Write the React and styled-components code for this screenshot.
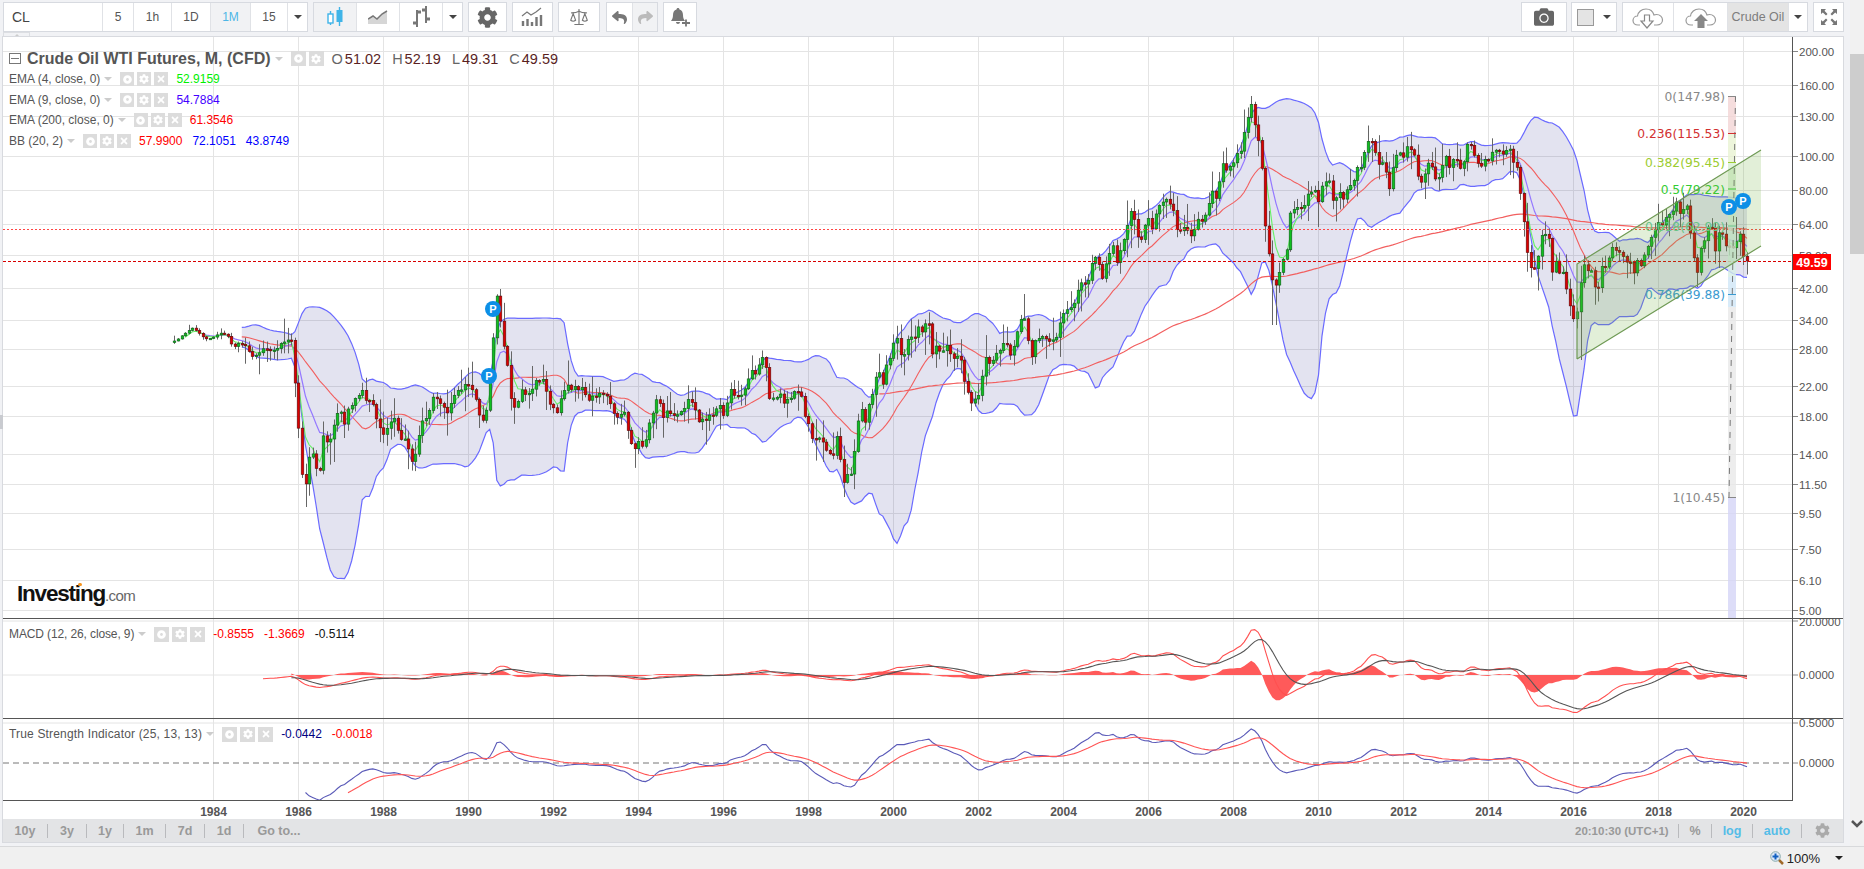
import React from "react";
import styled, { createGlobalStyle } from "styled-components";
import { FaCamera, FaCog, FaReply, FaShare, FaTimes, FaDotCircle } from "react-icons/fa";
import { Scale } from "lucide-react";

const GlobalStyle = createGlobalStyle`
  html, body {
    margin: 0;
    padding: 0;
    width: 1864px;
    height: 869px;
    overflow: hidden;
    background: #f1f1f1;
    font-family: "Liberation Sans", Arial, sans-serif;
  }
`;

// closes traced month by month, in page pixels
const TRACE = [
  [176,341],[180,337],[192,328],[198,332],[205,339],[212,338],[220,333],[227,335],[233,348],[240,342],[247,351],[254,357],[262,348],[272,353],[279,348],[286,337],[291,337],[293,357],[297,408],[301,462],[304,497],[308,462],[312,450],[316,466],[318,487],[323,433],[326,445],[330,443],[336,416],[340,408],[344,427],[347,408],[354,403],[357,397],[362,390],[364,401],[368,403],[372,399],[375,410],[378,427],[385,433],[389,423],[393,416],[401,441],[407,441],[411,460],[415,458],[417,439],[422,422],[428,413],[433,397],[439,400],[447,412],[453,398],[463,386],[467,381],[474,397],[478,410],[482,420],[485,423],[488,393],[492,352],[495,317],[497,295],[499,302],[502,343],[506,345],[509,387],[513,405],[517,406],[520,392],[527,394],[532,387],[542,376],[546,388],[549,405],
  [557,410],[560,403],[563,393],[567,383],[571,387],[580,387],[584,394],[587,399],[595,398],[598,395],[608,397],[612,408],[617,417],[623,408],[627,424],[630,438],[633,452],[637,441],[641,448],[645,444],[649,424],[655,403],[658,397],[662,418],[666,412],[677,417],[681,412],[690,397],[694,410],[698,420],[708,417],[715,413],[719,403],[723,417],[727,403],[729,388],[733,392],[737,400],[741,393],[747,383],[751,370],[757,373],[762,359],[766,370],[768,396],[774,397],[779,393],[782,400],[789,402],[793,391],[800,388],[804,417],[807,422],[812,438],[819,437],[822,440],[825,452],[833,460],[835,432],[839,448],[843,487],[847,476],[850,474],[853,467],[857,425],[861,409],[864,426],[868,403],[872,395],[874,383],[878,368],[882,386],[886,368],[889,362],[892,351],[896,335],[900,355],[903,361],[907,343],[910,325],[913,352],[917,323],[920,333],[924,325],[928,319],[932,354],[936,344],[938,352],[946,346],[952,357],[959,353],[963,375],[967,390],[971,403],[977,400],[981,387],[984,357],[992,363],[996,355],[1003,343],[1005,335],[1009,353],[1013,353],[1017,332],[1021,320],[1023,307],[1027,332],[1030,361],[1035,340],[1042,335],[1048,342],
  [1056,342],[1059,325],[1066,310],[1073,303],[1077,293],[1083,280],[1087,287],[1092,262],[1094,254],[1098,262],[1102,282],[1106,265],[1108,255],[1112,244],[1116,262],[1122,242],[1126,232],[1129,212],[1133,217],[1137,233],[1141,240],[1144,229],[1147,213],[1152,229],[1155,217],[1158,206],[1165,201],[1168,199],[1173,208],[1176,225],[1179,236],[1183,225],[1191,238],[1194,230],[1197,218],[1204,222],[1207,207],[1212,193],[1216,201],[1219,186],[1222,163],[1225,173],[1229,162],[1233,168],[1236,152],[1240,152],[1243,137],[1247,118],[1251,104],[1253,122],[1257,133],[1261,154],[1264,214],[1268,247],[1272,277],[1276,287],[1279,277],[1282,262],[1286,257],[1289,217],[1293,209],[1297,210],[1300,209],[1304,207],[1307,195],[1315,190],[1317,203],[1322,189],[1325,183],[1328,177],[1332,200],[1336,197],[1339,190],[1342,205],[1347,190],[1350,187],[1353,182],[1357,168],[1360,167],[1363,160],[1367,145],[1370,135],[1374,152],[1378,163],[1382,162],[1386,173],[1389,191],[1393,166],[1396,155],[1399,155],[1403,157],[1407,145],[1409,150],[1413,148],[1417,177],[1421,180],[1424,175],[1428,161],[1432,167],[1435,177],[1439,177],[1442,168],[1446,159],[1449,167],[1456,159],[1460,167],[1463,167],[1467,147],[1471,144],[1473,151],[1477,160],[1481,166],[1484,158],[1488,159],[1492,152],[1498,154],
  [1503,153],[1509,147],[1513,162],[1517,170],[1520,188],[1523,217],[1527,251],[1531,267],[1537,267],[1541,233],[1545,232],[1548,232],[1552,270],[1556,262],[1558,275],[1562,272],[1566,287],[1569,300],[1572,321],[1576,320],[1579,300],[1583,263],[1587,273],[1590,266],[1595,289],[1598,287],[1602,265],[1605,270],[1608,262],[1612,249],[1615,250],[1618,248],[1622,258],[1626,261],[1630,265],[1633,272],[1637,260],[1640,269],[1643,256],[1647,247],[1650,239],[1654,232],[1657,221],[1661,228],[1664,221],[1668,212],[1672,215],[1675,200],[1679,212],[1682,209],[1686,202],[1689,219],[1693,257],[1697,274],[1701,249],[1704,239],[1707,232],[1711,223],[1715,249],[1718,236],[1722,234],[1725,246],[1729,249],[1732,248],[1735,245],[1739,228],[1743,256],[1747,261],
];

// long wicks that stand out in the chart: x, high y, low y
const LONG_WICKS = [
  [1251,96,null],[1272,null,325],[1276,null,325],[1579,null,360],[1697,null,287],[499,289,null],[304,null,507],[843,null,497],[1735,217,null],[1743,null,265],[1023,294,null],
];

const N = 445;
const STEP = 3.5417;
const yOfPrice = (p) => 853.8 - 151.5 * Math.log(p);
const priceOfY = (y) => Math.exp((853.8 - y) / 151.5);

let seed = 71;
const rand = () => {
  seed = (seed * 16807) % 2147483647;
  return seed / 2147483647;
};

const traceAt = (x) => {
  if (x <= TRACE[0][0]) return TRACE[0][1];
  for (let i = 1; i < TRACE.length; i++) {
    if (x <= TRACE[i][0]) {
      const [x0, y0] = TRACE[i - 1];
      const [x1, y1] = TRACE[i];
      return y0 + ((y1 - y0) * (x - x0)) / (x1 - x0);
    }
  }
  return TRACE[TRACE.length - 1][1];
};

const xs = Array.from({ length: N }, (_, i) => 1747 - (N - 1 - i) * STEP);
// a little month to month noise, the trace is smoother than the real closes
const closeY = xs.map((x, i) => traceAt(x) + (i < 20 || i > N - 3 ? 0 : (rand() - 0.5) * 6));
const closes = closeY.map(priceOfY);

const emaOf = (arr, period) => {
  const out = arr.map(() => null);
  const first = arr.findIndex((v) => v !== null);
  if (first < 0 || first + period > arr.length) return out;
  let prev = 0;
  for (let i = first; i < first + period; i++) prev += arr[i] / period;
  out[first + period - 1] = prev;
  const k = 2 / (period + 1);
  for (let i = first + period; i < arr.length; i++) {
    prev = arr[i] * k + prev * (1 - k);
    out[i] = prev;
  }
  return out;
};

const mid = closes.map(() => null);
const upper = closes.map(() => null);
const lower = closes.map(() => null);
for (let i = 19; i < N; i++) {
  const win = closes.slice(i - 19, i + 1);
  const m = win.reduce((a, b) => a + b, 0) / 20;
  const sd = Math.sqrt(win.reduce((a, b) => a + (b - m) * (b - m), 0) / 20);
  mid[i] = m;
  upper[i] = m + 2 * sd;
  lower[i] = Math.max(m - 2 * sd, 1);
}

const ema12 = emaOf(closes, 12);
const ema26 = emaOf(closes, 26);
const macd = closes.map((_, i) => (ema26[i] === null ? null : ema12[i] - ema26[i]));
const signal = emaOf(macd, 9);

const mom = closes.map((c, i) => (i === 0 ? null : c - closes[i - 1]));
const absMom = mom.map((m) => (m === null ? null : Math.abs(m)));
const num = emaOf(emaOf(mom, 25), 13);
const den = emaOf(emaOf(absMom, 25), 13);
const tsi = num.map((v, i) => (v === null ? null : v / den[i]));
const tsiSignal = emaOf(tsi, 13);

const linePath = (values, toY) => {
  let d = "";
  values.forEach((v, i) => {
    if (v === null) return;
    d += `${d ? "L" : "M"}${xs[i].toFixed(1)} ${toY(v).toFixed(1)}`;
  });
  return d;
};

const macdY = (v) => 675 - v * 2.72;
// the traced closes have less chop than the real ones, so the tsi comes out a bit tall
const tsiY = (v) => 763 - v * (v > 0 ? 64 : 74);

const bandPath = () => {
  const top = [];
  const bottom = [];
  upper.forEach((v, i) => {
    if (v === null) return;
    top.push(`${xs[i].toFixed(1)} ${yOfPrice(v).toFixed(1)}`);
    bottom.unshift(`${xs[i].toFixed(1)} ${yOfPrice(lower[i]).toFixed(1)}`);
  });
  return `M${top.join("L")}L${bottom.join("L")}Z`;
};

const histPath = () => {
  const pts = [];
  signal.forEach((s, i) => {
    if (s !== null) pts.push([xs[i], macdY(macd[i] - s)]);
  });
  return `M${pts[0][0]} 675${pts.map((p) => `L${p[0].toFixed(1)} ${p[1].toFixed(1)}`).join("")}L${pts[pts.length - 1][0]} 675Z`;
};

const candles = xs.map((x, i) => {
  const close = closeY[i];
  const open = i === 0 ? close + 1 : closeY[i - 1];
  const boost = i < 20 ? 0.3 : 1;
  let high = Math.min(open, close) - (1 + rand() * rand() * 26) * boost;
  let low = Math.max(open, close) + (1 + rand() * rand() * 26) * boost;
  LONG_WICKS.forEach(([wx, h, l]) => {
    if (Math.abs(wx - x) < 1.8) {
      if (h !== null) high = h;
      if (l !== null) low = l;
    }
  });
  return { x, open, close, high, low };
});

const PRICE_TICKS = [200, 160, 130, 100, 80, 64, 52, 42, 34, 28, 22, 18, 14, 11.5, 9.5, 7.5, 6.1, 5];
const YEARS = Array.from({ length: 19 }, (_, i) => 1984 + i * 2);
const yearX = (year) => 213.5 + (year - 1984) * 42.5;

const FIB_LEVELS = [
  { label: "0(147.98)", y: 96.5, color: "#888888" },
  { label: "0.236(115.53)", y: 133.5, color: "#d23030" },
  { label: "0.382(95.45)", y: 162.5, color: "#9ccc30" },
  { label: "0.5(79.22)", y: 189, color: "#33cc33" },
  { label: "0.618(62.99)", y: 226, color: "#66c89a" },
  { label: "0.786(39.88)", y: 294.5, color: "#3a9ad0" },
  { label: "1(10.45)", y: 497.5, color: "#888888" },
];

const FIB_BANDS = [
  { y: 96.5, h: 37, fill: "#f2d5d5" },
  { y: 133.5, h: 29, fill: "#e8f2d2" },
  { y: 162.5, h: 26.5, fill: "#d8f0d2" },
  { y: 189, h: 37, fill: "#d8f0dc" },
  { y: 226, h: 51, fill: "#d6eee6" },
  { y: 277, h: 30, fill: "#cfe6f6" },
  { y: 307, h: 190.5, fill: "#e8e8e8" },
  { y: 497.5, h: 120.5, fill: "#d4d4f6" },
];

const Page = styled.div`
  display: flex;
  flex-direction: column;
  width: 1864px;
  height: 869px;
  overflow: hidden;
`;

const Body = styled.div`
  display: flex;
  height: 847px;
  border-bottom: 1px solid #d8d9db;
  box-sizing: border-box;
`;

const LeftColumn = styled.div`
  width: 1850px;
  background: #f1f2f5;
`;

const ScrollTrack = styled.div`
  position: relative;
  width: 14px;
  background: #f1f1f1;
`;

const ScrollThumb = styled.div`
  margin-top: 54px;
  height: 200px;
  background: #cdcdcd;
`;

const ScrollArrow = styled.svg`
  position: absolute;
  left: 0;
  top: 819px;
`;

const Toolbar = styled.div`
  display: flex;
  align-items: flex-start;
  height: 32px;
  padding: 2px 6px 0 3px;
  box-sizing: border-box;
`;

const Group = styled.div`
  display: flex;
  height: 30px;
  box-sizing: border-box;
  border: 1px solid #d7dae0;
  margin-right: ${(p) => p.$gap ?? 5}px;
  background: #fff;
`;

const ToolButton = styled.div`
  display: flex;
  align-items: center;
  justify-content: center;
  gap: ${(p) => p.$gap ?? 0}px;
  width: ${(p) => p.$w}px;
  box-sizing: border-box;
  border-left: ${(p) => (p.$first ? "none" : "1px solid #e0e2e6")};
  background: ${(p) => (p.$active ? "#f1f2f4" : p.$dark ? "#e4e4e4" : "#fff")};
  color: ${(p) => (p.$active ? "#4db6e6" : p.$dark ? "#7d7d7d" : "#555")};
  font-size: ${(p) => (p.$dark ? 12.5 : 12)}px;
`;

const SymbolBox = styled(ToolButton)`
  justify-content: flex-start;
  padding-left: 8px;
  font-size: 14px;
  color: #444;
`;

const Spacer = styled.div`
  flex: 1;
`;

const Caret = styled.span`
  display: inline-block;
  width: 0;
  height: 0;
  border-left: ${(p) => p.$size ?? 4}px solid transparent;
  border-right: ${(p) => p.$size ?? 4}px solid transparent;
  border-top: ${(p) => p.$size ?? 4}px solid ${(p) => p.$color ?? "#444"};
`;

const TabRow = styled.div`
  display: flex;
  height: 5px;
  margin-left: 3px;
`;

const Tab = styled.div`
  display: flex;
  justify-content: center;
  width: 27px;
  box-sizing: border-box;
  border: 1px solid #dcdee2;
  border-bottom: none;
  padding-top: 1px;
`;

const TabArrow = styled.span`
  width: 0;
  height: 0;
  border-left: 3px solid transparent;
  border-right: 3px solid transparent;
  border-bottom: 3px solid #ccc;
`;

const ChartFrame = styled.div`
  position: relative;
  width: 1840px;
  height: 805px;
  margin-left: 3px;
  background: #fff;
  box-shadow: 0 0 0 1px #d8dadf;
`;

const SideHandle = styled.span`
  position: absolute;
  left: -3px;
  top: 378px;
  width: 3px;
  height: 14px;
  background: #c9cbd0;
`;

const ChartSvg = styled.svg`
  display: block;
`;

const AxisLabel = styled.text`
  font-family: "Liberation Sans", Arial, sans-serif;
  font-size: 11.5px;
  fill: #555;
`;

const YearLabel = styled.text`
  font-family: "Liberation Sans", Arial, sans-serif;
  font-size: 12px;
  font-weight: 700;
  fill: #555;
  text-anchor: middle;
`;

const FibLabel = styled.text`
  font-family: "DejaVu Sans", Verdana, sans-serif;
  font-size: 12.3px;
  text-anchor: end;
`;

const Badge = styled.text`
  font-family: "Liberation Sans", Arial, sans-serif;
  font-size: 11px;
  font-weight: 700;
  fill: #fff;
  text-anchor: middle;
`;

const PriceTag = styled.text`
  font-family: "Liberation Sans", Arial, sans-serif;
  font-size: 12.5px;
  font-weight: 700;
  fill: #fff;
  text-anchor: middle;
`;

const MainLegend = styled.div`
  position: absolute;
  left: 6px;
  top: 11px;
  display: flex;
  flex-direction: column;
`;

const SubLegend = styled.div`
  position: absolute;
  left: 6px;
  top: ${(p) => p.$top}px;
`;

const LegendRow = styled.div`
  display: flex;
  align-items: center;
  height: ${(p) => p.$h ?? 20.6}px;
  font-size: 12px;
  color: #555;
  white-space: nowrap;
`;

const LegendName = styled.span`
  letter-spacing: ${(p) => p.$ls ?? 0}px;
`;

const LegendTitle = styled.span`
  font-size: 16px;
  font-weight: 700;
  color: #555;
`;

const Toggle = styled.span`
  display: flex;
  align-items: center;
  justify-content: center;
  width: 12px;
  height: 11px;
  margin-right: 6px;
  border: 1px solid #777;
  box-sizing: border-box;

  &::after {
    content: "";
    width: 8px;
    height: 1px;
    background: #777;
  }
`;

const LegendCaret = styled.span`
  margin: 0 8px 0 4px;
  display: flex;
`;

const MiniIcons = styled.span`
  display: flex;
  gap: 3px;
  margin-right: ${(p) => p.$gap ?? 8}px;
`;

const MiniIcon = styled.span`
  display: flex;
  align-items: center;
  justify-content: center;
  width: ${(p) => p.$size ?? 14}px;
  height: ${(p) => p.$size ?? 14}px;
  background: #dcdcdc;
  color: #fff;
`;

const Value = styled.span`
  color: ${(p) => p.$color};
  margin-right: ${(p) => p.$gap ?? 10}px;
`;

const OhlcValue = styled.span`
  font-size: 14.5px;
  color: #666;
  margin-right: 11px;

  b {
    font-weight: 400;
    color: #5a1f1f;
    margin-left: 2px;
  }
`;

const Logo = styled.div`
  position: absolute;
  left: 14px;
  top: 544px;
  display: flex;
  align-items: baseline;
  color: #111;
  font-size: 22.5px;
  font-weight: 700;
  letter-spacing: -1.2px;
`;

const LogoCom = styled.span`
  font-size: 15px;
  font-weight: 400;
  color: #666;
  letter-spacing: -0.6px;
`;

const LogoDot = styled.span`
  position: absolute;
  left: 61px;
  top: 2px;
  width: 4px;
  height: 3px;
  background: #f7941d;
  border-radius: 2px;
`;

const RangeBar = styled.div`
  display: flex;
  align-items: center;
  height: 23px;
  background: #e3e4e6;
  font-size: 12.5px;
  font-weight: 700;
  color: #999;
`;

const RangeItem = styled.div`
  display: flex;
  align-items: center;
  justify-content: center;
  width: ${(p) => p.$w}px;
  height: 14px;
  box-sizing: border-box;
  border-right: ${(p) => (p.$plain ? "none" : "1px solid #b9babd")};
  color: ${(p) => (p.$on ? "#55bde8" : "#999")};
`;

const ClockItem = styled(RangeItem)`
  justify-content: flex-start;
  font-size: 11.5px;
`;

const RangeSpacer = styled.div`
  flex: 1;
`;

const StatusBar = styled.div`
  display: flex;
  align-items: center;
  justify-content: flex-end;
  height: 22px;
  background: #f0f0f0;
  font-size: 13px;
  color: #222;
`;

const Zoom = styled.span`
  margin: 0 15px 0 3px;
`;

const ZoomCaret = styled.span`
  display: flex;
  margin-right: 21px;
`;

const CandleIcon = () => (
  <svg width="20" height="22" viewBox="0 0 20 22">
    <path d="M5.5 5v14M14.5 1v19" stroke="#3fb4e8" strokeWidth="1.4" />
    <rect x="3" y="8" width="5" height="9" fill="#fff" stroke="#3fb4e8" strokeWidth="1.4" />
    <rect x="11.5" y="4" width="6" height="12" fill="#3fb4e8" />
  </svg>
);

const AreaIcon = () => (
  <svg width="20" height="16" viewBox="0 0 20 16">
    <path d="M0 15V10L5 7l4 3 5-5 5-3v13z" fill="#d6d6d6" />
    <path d="M0 10L5 7l4 3 5-5 5-3" fill="none" stroke="#777" strokeWidth="1.5" />
  </svg>
);

const BarsIcon = () => (
  <svg width="20" height="24" viewBox="0 0 20 24">
    <path d="M6 5v17M15 1v17" stroke="#777" strokeWidth="2" />
    <path d="M6 7h4M2 18h4M11 5h4M15 14h4" stroke="#777" strokeWidth="3" />
  </svg>
);

const IndicatorsIcon = () => (
  <svg width="24" height="20" viewBox="0 0 24 20">
    <path d="M2 19v-5M6.500 19v-7M11 19v-4M15.500 19v-9M20 19v-11" stroke="#777" strokeWidth="2.4" />
    <path d="M1 9l5-4 4 3 5-3 5-4" fill="none" stroke="#777" strokeWidth="1.2" />
  </svg>
);

const BellIcon = () => (
  <svg width="22" height="20" viewBox="0 0 22 20">
    <path d="M9 1c.9 0 1.500.7 1.500 1.500C13 3.300 14 5.500 14 8c0 3 .8 4.500 2 6H2c1.200-1.500 2-3 2-6 0-2.500 1-4.700 3.500-5.500C7.500 1.700 8.100 1 9 1zM7 15h4c0 1.300-.9 2-2 2s-2-.7-2-2z" fill="#777" />
    <path d="M13 16h8M17 12.500v7" stroke="#777" strokeWidth="1.800" />
  </svg>
);

const CLOUD = "M9 21h-2c-3 0-5-2-5-4.500S4 12 6.500 12C7 8 10.500 5 15 5c4 0 7 2.500 8 6 .8-.4 1.500-.5 2.500-.5 3.500 0 6 2.500 6 5.500s-2.500 5-5.500 5h-3";

const CloudDown = () => (
  <svg width="34" height="26" viewBox="0 0 34 26">
    <path d={CLOUD} fill="none" stroke="#999" strokeWidth="1.200" />
    <path d="M13.500 11h5v6h3.500L16 24l-6-7h3.500z" fill="#fff" stroke="#888" strokeWidth="1.200" />
  </svg>
);

const CloudUp = () => (
  <svg width="34" height="26" viewBox="0 0 34 26">
    <path d={CLOUD} fill="none" stroke="#999" strokeWidth="1.200" />
    <path d="M13.500 24v-7H10l7-7 7 7h-3.500v7z" fill="#888" />
  </svg>
);

const FullscreenIcon = () => (
  <svg width="18" height="18" viewBox="0 0 18 18">
    <path d="M1 1h5L4.500 2.800 7.500 6 6 7.500 2.800 4.500 1 6zM17 1v5l-1.800-1.500L12 7.500 10.500 6l3-3.200L12 1zM1 17v-5l1.800 1.500L6 10.500 7.500 12l-3 3.200L6 17zM17 17h-5l1.500-1.800L10.500 12l1.500-1.500 3.200 3L17 12z" fill="#777" />
  </svg>
);

const ZoomIcon = () => (
  <svg width="14" height="14" viewBox="0 0 14 14">
    <path d="M8 8l5 5" stroke="#a06a2a" strokeWidth="2.500" />
    <circle cx="5.500" cy="5.500" r="4.800" fill="#dce8f8" stroke="#8aa" strokeWidth="1" />
    <path d="M5.500 2.500v6M2.500 5.500h6" stroke="#1060c0" strokeWidth="2" />
  </svg>
);

const MiniSet = ({ size, gap }) => (
  <MiniIcons $gap={gap}>
    <MiniIcon $size={size}><FaDotCircle size={9} /></MiniIcon>
    <MiniIcon $size={size}><FaCog size={10} /></MiniIcon>
    <MiniIcon $size={size}><FaTimes size={10} /></MiniIcon>
  </MiniIcons>
);

const Indicator = ({ name, values, h, size, gap, ls }) => (
  <LegendRow $h={h}>
    <LegendName $ls={ls}>{name}</LegendName>
    <LegendCaret><Caret $color="#ccc" /></LegendCaret>
    <MiniSet size={size} gap={gap} />
    {values.map(([text, color]) => (
      <Value key={text} $color={color}>{text}</Value>
    ))}
  </LegendRow>
);

function PriceChart() {
  const last = 1793;
  return (
    <ChartSvg width="1840" height="782" viewBox="3 37 1840 782">
      <defs>
        <clipPath id="mainClip"><rect x="3" y="38" width="1790" height="580" /></clipPath>
        <clipPath id="macdClip"><rect x="3" y="619" width="1790" height="99" /></clipPath>
      </defs>

      {YEARS.map((year) => (
        <line key={year} x1={yearX(year)} x2={yearX(year)} y1="37" y2="800" stroke="#e4e4e4" strokeWidth="1" />
      ))}
      {PRICE_TICKS.map((p) => {
        const y = Math.round(yOfPrice(p)) + 0.5;
        return (
          <g key={p}>
            <line x1="3" x2={last} y1={y} y2={y} stroke="#e4e4e4" />
            <line x1={last} x2="1798" y1={y} y2={y} stroke="#888" />
          </g>
        );
      })}
      <line x1="3" x2={last} y1="621" y2="621" stroke="#e4e4e4" />
      <line x1="3" x2={last} y1="675" y2="675" stroke="#e4e4e4" />
      <line x1="3" x2={last} y1="723" y2="723" stroke="#e4e4e4" />
      <line x1="3" x2={last} y1="763" y2="763" stroke="#777" strokeDasharray="6 4" />
      {[621, 675, 723, 763].map((y) => (
        <line key={y} x1={last} x2="1798" y1={y} y2={y} stroke="#888" />
      ))}

      <g clipPath="url(#mainClip)">
        <path d={bandPath()} fill="rgba(60,60,150,0.14)" stroke="none" />
        <path d={linePath(upper, yOfPrice)} fill="none" stroke="#6a6aff" strokeWidth="1.200" />
        <path d={linePath(lower, yOfPrice)} fill="none" stroke="#6a6aff" strokeWidth="1.200" />
        <path d={linePath(mid, yOfPrice)} fill="none" stroke="#f25f5f" strokeWidth="1.100" />
        <path d={linePath(emaOf(closes, 200), yOfPrice)} fill="none" stroke="#f25f5f" strokeWidth="1.200" />
        <path d={linePath(emaOf(closes, 9), yOfPrice)} fill="none" stroke="#9478ff" strokeWidth="1.200" />
        <path d={linePath(emaOf(closes, 4), yOfPrice)} fill="none" stroke="#66f066" strokeWidth="1.100" />

        {candles.map((c) => {
          const up = c.close < c.open;
          const top = Math.min(c.open, c.close);
          const h = Math.max(Math.abs(c.open - c.close), 1.5);
          const x = Math.round(c.x);
          return (
            <g key={c.x}>
              <line x1={x + 0.5} x2={x + 0.5} y1={c.high} y2={c.low} stroke="#666" />
              <rect x={x - 0.8} y={top} width="2.6" height={h} fill={up ? "#10c020" : "#dc0000"} stroke={up ? "#0d5a18" : "#5a0a0a"} strokeWidth="0.6" />
            </g>
          );
        })}

        <line x1="3" x2={last} y1="229.5" y2="229.5" stroke="#f44" strokeDasharray="2 2" />
        <line x1="3" x2={last} y1="261.5" y2="261.5" stroke="#d80000" strokeDasharray="3 2" />

        {FIB_BANDS.map((b) => (
          <rect key={b.y} x="1728" y={b.y} width="8" height={b.h} fill={b.fill} opacity="0.8" />
        ))}
        <line x1="1735.5" y1="96" x2="1729" y2="497" stroke="#777" strokeDasharray="6 6" />
        {FIB_LEVELS.map((f) => (
          <g key={f.label}>
            <line x1="1728" x2="1736" y1={f.y} y2={f.y} stroke={f.color} />
            <FibLabel x="1725" y={f.y + 4.5} fill={f.color}>{f.label}</FibLabel>
          </g>
        ))}

        <path d="M1577 264L1761 150V246L1577 359Z" fill="rgba(110,175,60,0.2)" />
        <path d="M1577 359V264L1761 150M1577 359L1761 246" fill="none" stroke="#6f9a55" strokeWidth="1.200" />

        {[[493, 309], [489, 376], [1729, 207], [1743, 201]].map(([cx, cy]) => (
          <g key={cx}>
            <circle cx={cx} cy={cy} r="8" fill="#0d8fe6" />
            <Badge x={cx} y={cy + 4}>P</Badge>
          </g>
        ))}
      </g>

      <g clipPath="url(#macdClip)">
        <path d={histPath()} fill="#ff5a5a" />
        <path d={linePath(macd, macdY)} fill="none" stroke="#ff5050" strokeWidth="1.100" />
        <path d={linePath(signal, macdY)} fill="none" stroke="#555" strokeWidth="1.100" />
      </g>

      <path d={linePath(tsi, tsiY)} fill="none" stroke="#5a5ab8" strokeWidth="1.100" />
      <path d={linePath(tsiSignal, tsiY)} fill="none" stroke="#ff5555" strokeWidth="1.100" />

      <path d="M3 618.5H1843M3 718.500H1843M3 800.500H1793M1792.500 37V800" fill="none" stroke="#555" strokeWidth="1" />

      {PRICE_TICKS.map((p) => (
        <AxisLabel key={p} x="1799" y={Math.round(yOfPrice(p)) + 4.5}>{p.toFixed(2)}</AxisLabel>
      ))}
      <AxisLabel x="1799" y="625.500">20.0000</AxisLabel>
      <AxisLabel x="1799" y="679">0.0000</AxisLabel>
      <AxisLabel x="1799" y="727">0.5000</AxisLabel>
      <AxisLabel x="1799" y="767">0.0000</AxisLabel>

      <rect x="1793" y="254" width="38" height="16" fill="#ff0000" />
      <PriceTag x="1812" y="266.500">49.59</PriceTag>

      {YEARS.map((year) => (
        <YearLabel key={year} x={yearX(year)} y="815.500">{year}</YearLabel>
      ))}
    </ChartSvg>
  );
}

export default function App() {
  return (
    <Page>
      <GlobalStyle />
      <Body>
        <LeftColumn>
          <Toolbar>
            <Group>
              <SymbolBox $w={98} $first>CL</SymbolBox>
              <ToolButton $w={31}>5</ToolButton>
              <ToolButton $w={38}>1h</ToolButton>
              <ToolButton $w={39}>1D</ToolButton>
              <ToolButton $w={40} $active>1M</ToolButton>
              <ToolButton $w={37}>15</ToolButton>
              <ToolButton $w={20}><Caret /></ToolButton>
            </Group>
            <Group>
              <ToolButton $w={42} $first $active><CandleIcon /></ToolButton>
              <ToolButton $w={43}><AreaIcon /></ToolButton>
              <ToolButton $w={43}><BarsIcon /></ToolButton>
              <ToolButton $w={20}><Caret /></ToolButton>
            </Group>
            <Group>
              <ToolButton $w={37} $first><FaCog size={21} color="#666" /></ToolButton>
            </Group>
            <Group>
              <ToolButton $w={39} $first><IndicatorsIcon /></ToolButton>
            </Group>
            <Group $gap={6}>
              <ToolButton $w={40} $first><Scale size={20} color="#777" strokeWidth={1.400} /></ToolButton>
            </Group>
            <Group>
              <ToolButton $w={25} $first><FaReply size={15} color="#777" /></ToolButton>
              <ToolButton $w={25} $active><FaShare size={15} color="#bbb" /></ToolButton>
            </Group>
            <Group>
              <ToolButton $w={32} $first><BellIcon /></ToolButton>
            </Group>
            <Spacer />
            <Group $gap={4}>
              <ToolButton $w={44} $first><FaCamera size={20} color="#666" /></ToolButton>
            </Group>
            <Group>
              <ToolButton $w={44} $first $gap={9}>
                <svg width="17" height="17" viewBox="0 0 17 17"><rect x="0.500" y="0.500" width="16" height="16" fill="#e4e4e4" stroke="#999" /></svg>
                <Caret />
              </ToolButton>
            </Group>
            <Group>
              <ToolButton $w={50} $first><CloudDown /></ToolButton>
              <ToolButton $w={54}><CloudUp /></ToolButton>
              <ToolButton $w={61} $dark>Crude Oil</ToolButton>
              <ToolButton $w={19}><Caret /></ToolButton>
            </Group>
            <Group $gap={0}>
              <ToolButton $w={29} $first><FullscreenIcon /></ToolButton>
            </Group>
          </Toolbar>
          <TabRow>
            <Tab><TabArrow /></Tab>
          </TabRow>
          <ChartFrame>
            <SideHandle />
            <PriceChart />
            <MainLegend>
              <LegendRow $h={21}>
                <Toggle />
                <LegendTitle>Crude Oil WTI Futures, M, (CFD)</LegendTitle>
                <LegendCaret><Caret $color="#ccc" /></LegendCaret>
                <MiniIcons $gap={8}>
                  <MiniIcon $size={15}><FaDotCircle size={9} /></MiniIcon>
                  <MiniIcon $size={15}><FaCog size={10} /></MiniIcon>
                </MiniIcons>
                <OhlcValue>O<b>51.02</b></OhlcValue>
                <OhlcValue>H<b>52.19</b></OhlcValue>
                <OhlcValue>L<b>49.31</b></OhlcValue>
                <OhlcValue>C<b>49.59</b></OhlcValue>
              </LegendRow>
              <Indicator name="EMA (4, close, 0)" values={[["52.9159", "#00f000"]]} />
              <Indicator name="EMA (9, close, 0)" values={[["54.7884", "#4400ff"]]} />
              <Indicator name="EMA (200, close, 0)" values={[["61.3546", "#ff0000"]]} />
              <Indicator name="BB (20, 2)" values={[["57.9900", "#ff0000"], ["72.1051", "#0000ff"], ["43.8749", "#0000ff"]]} />
            </MainLegend>
            <Logo>
              Investing<LogoCom>.com</LogoCom>
              <LogoDot />
            </Logo>
            <SubLegend $top={587}>
              <Indicator name="MACD (12, 26, close, 9)" ls={-0.12} size={15} values={[["-0.8555", "#ff0000"], ["-1.3669", "#ff0000"], ["-0.5114", "#111"]]} />
            </SubLegend>
            <SubLegend $top={687}>
              <Indicator name="True Strength Indicator (25, 13, 13)" ls={0.17} size={15} values={[["-0.0442", "#000080"], ["-0.0018", "#ff0000"]]} />
            </SubLegend>
            <RangeBar>
              <RangeItem $w={45}>10y</RangeItem>
              <RangeItem $w={39}>3y</RangeItem>
              <RangeItem $w={37}>1y</RangeItem>
              <RangeItem $w={42}>1m</RangeItem>
              <RangeItem $w={39}>7d</RangeItem>
              <RangeItem $w={39}>1d</RangeItem>
              <RangeItem $w={70} $plain>Go to...</RangeItem>
              <RangeSpacer />
              <ClockItem $w={104}>20:10:30 (UTC+1)</ClockItem>
              <RangeItem $w={33}>%</RangeItem>
              <RangeItem $w={41} $on>log</RangeItem>
              <RangeItem $w={49} $on>auto</RangeItem>
              <RangeItem $w={41} $plain><FaCog size={15} color="#aaa" /></RangeItem>
            </RangeBar>
          </ChartFrame>
        </LeftColumn>
        <ScrollTrack>
          <ScrollThumb />
          <ScrollArrow width="14" height="12" viewBox="0 0 14 12">
            <path d="M2 2l5 5 5-5" fill="none" stroke="#555" strokeWidth="2.500" />
          </ScrollArrow>
        </ScrollTrack>
      </Body>
      <StatusBar>
        <ZoomIcon />
        <Zoom>100%</Zoom>
        <ZoomCaret><Caret $size={4} $color="#222" /></ZoomCaret>
      </StatusBar>
    </Page>
  );
}
